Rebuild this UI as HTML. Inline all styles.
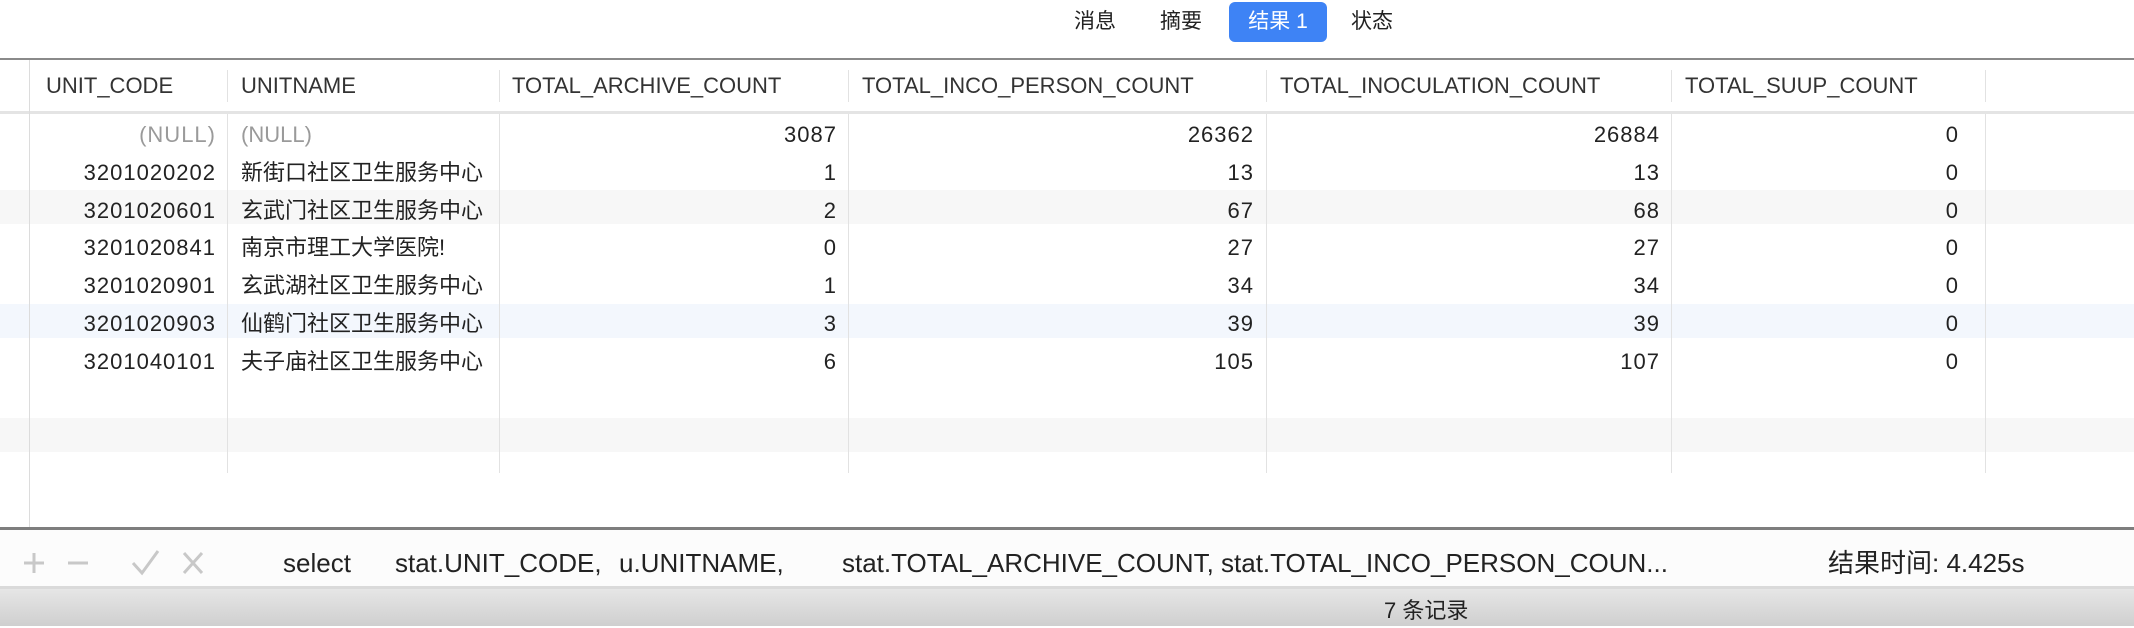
<!DOCTYPE html>
<html><head><meta charset="utf-8"><style>
*{margin:0;padding:0;box-sizing:border-box}
body{width:2134px;height:626px;overflow:hidden;background:#fff;position:relative;font-family:"Liberation Sans","Noto Sans CJK SC",sans-serif;font-size:22px;color:#222}
.a{position:absolute;white-space:pre}
.tab{position:absolute;top:2px;height:40px;line-height:40px;font-size:21px;color:#222}
.vl{position:absolute;width:1px;background:#e2e2e2}
.r{position:absolute;height:38px;line-height:38px;white-space:pre}
.rt{text-align:right;letter-spacing:1px}
.n{color:#9a9a9a}
.tb{position:absolute;white-space:pre;top:541px;line-height:44px;font-size:26px}
</style></head><body>
<div class="tab" style="left:1074px">消息</div>
<div class="tab" style="left:1160px">摘要</div>
<div class="tab" style="left:1229px;width:98px;background:#3e83f5;color:#fff;border-radius:6px;text-align:center">结果 1</div>
<div class="tab" style="left:1351px">状态</div>

<div style="position:absolute;left:0;top:58px;width:2134px;height:2px;background:#8a8a8a"></div>
<div style="position:absolute;left:0;top:111px;width:2134px;height:3px;background:#e4e4e4"></div>

<div style="position:absolute;left:0;top:190px;width:2134px;height:34px;background:#f7f7f7"></div>
<div style="position:absolute;left:0;top:304px;width:2134px;height:34px;background:#f3f7fd"></div>
<div style="position:absolute;left:0;top:418px;width:2134px;height:34px;background:#f7f7f7"></div>

<div class="vl" style="left:29px;top:60px;height:468px;background:#dcdcdc"></div>
<div class="vl" style="left:227px;top:70px;height:32px"></div>
<div class="vl" style="left:499px;top:70px;height:32px"></div>
<div class="vl" style="left:848px;top:70px;height:32px"></div>
<div class="vl" style="left:1266px;top:70px;height:32px"></div>
<div class="vl" style="left:1671px;top:70px;height:32px"></div>
<div class="vl" style="left:1985px;top:70px;height:32px"></div>
<div class="vl" style="left:227px;top:114px;height:359px"></div>
<div class="vl" style="left:499px;top:114px;height:359px"></div>
<div class="vl" style="left:848px;top:114px;height:359px"></div>
<div class="vl" style="left:1266px;top:114px;height:359px"></div>
<div class="vl" style="left:1671px;top:114px;height:359px"></div>
<div class="vl" style="left:1985px;top:114px;height:359px"></div>

<div class="a" style="left:46px;top:72px;line-height:28px;color:#333">UNIT_CODE</div>
<div class="a" style="left:241px;top:72px;line-height:28px;color:#333">UNITNAME</div>
<div class="a" style="left:512px;top:72px;line-height:28px;color:#333">TOTAL_ARCHIVE_COUNT</div>
<div class="a" style="left:862px;top:72px;line-height:28px;color:#333">TOTAL_INCO_PERSON_COUNT</div>
<div class="a" style="left:1280px;top:72px;line-height:28px;color:#333">TOTAL_INOCULATION_COUNT</div>
<div class="a" style="left:1685px;top:72px;line-height:28px;color:#333">TOTAL_SUUP_COUNT</div>

<div style="position:absolute;left:0;top:116px">
<div class="r rt n" style="left:30px;width:186px;top:0">(NULL)</div><div class="r n" style="left:241px;top:0">(NULL)</div>
<div class="r rt" style="left:500px;width:337px;top:0">3087</div><div class="r rt" style="left:849px;width:405px;top:0">26362</div><div class="r rt" style="left:1267px;width:393px;top:0">26884</div><div class="r rt" style="left:1672px;width:287px;top:0">0</div>

<div class="r rt" style="left:30px;width:186px;top:38px">3201020202</div><div class="r" style="left:241px;top:38px">新街口社区卫生服务中心</div>
<div class="r rt" style="left:500px;width:337px;top:38px">1</div><div class="r rt" style="left:849px;width:405px;top:38px">13</div><div class="r rt" style="left:1267px;width:393px;top:38px">13</div><div class="r rt" style="left:1672px;width:287px;top:38px">0</div>

<div class="r rt" style="left:30px;width:186px;top:76px">3201020601</div><div class="r" style="left:241px;top:76px">玄武门社区卫生服务中心</div>
<div class="r rt" style="left:500px;width:337px;top:76px">2</div><div class="r rt" style="left:849px;width:405px;top:76px">67</div><div class="r rt" style="left:1267px;width:393px;top:76px">68</div><div class="r rt" style="left:1672px;width:287px;top:76px">0</div>

<div class="r rt" style="left:30px;width:186px;top:113px">3201020841</div><div class="r" style="left:241px;top:113px">南京市理工大学医院!</div>
<div class="r rt" style="left:500px;width:337px;top:113px">0</div><div class="r rt" style="left:849px;width:405px;top:113px">27</div><div class="r rt" style="left:1267px;width:393px;top:113px">27</div><div class="r rt" style="left:1672px;width:287px;top:113px">0</div>

<div class="r rt" style="left:30px;width:186px;top:151px">3201020901</div><div class="r" style="left:241px;top:151px">玄武湖社区卫生服务中心</div>
<div class="r rt" style="left:500px;width:337px;top:151px">1</div><div class="r rt" style="left:849px;width:405px;top:151px">34</div><div class="r rt" style="left:1267px;width:393px;top:151px">34</div><div class="r rt" style="left:1672px;width:287px;top:151px">0</div>

<div class="r rt" style="left:30px;width:186px;top:189px">3201020903</div><div class="r" style="left:241px;top:189px">仙鹤门社区卫生服务中心</div>
<div class="r rt" style="left:500px;width:337px;top:189px">3</div><div class="r rt" style="left:849px;width:405px;top:189px">39</div><div class="r rt" style="left:1267px;width:393px;top:189px">39</div><div class="r rt" style="left:1672px;width:287px;top:189px">0</div>

<div class="r rt" style="left:30px;width:186px;top:227px">3201040101</div><div class="r" style="left:241px;top:227px">夫子庙社区卫生服务中心</div>
<div class="r rt" style="left:500px;width:337px;top:227px">6</div><div class="r rt" style="left:849px;width:405px;top:227px">105</div><div class="r rt" style="left:1267px;width:393px;top:227px">107</div><div class="r rt" style="left:1672px;width:287px;top:227px">0</div>
</div>

<div style="position:absolute;left:0;top:527px;width:2134px;height:3px;background:#7e7e7e"></div>
<div style="position:absolute;left:0;top:530px;width:2134px;height:56px;background:#fcfcfc"></div>
<div style="position:absolute;left:0;top:586px;width:2134px;height:3px;background:#dadada"></div>
<div style="position:absolute;left:0;top:589px;width:2134px;height:37px;background:linear-gradient(#e6e6e6,#cfcfcf)"></div>

<svg style="position:absolute;left:0;top:540px" width="220" height="46">
<g stroke="#c8c8c8" stroke-width="3" fill="none">
<path d="M24 23H44M34 13V33"/>
<path d="M68 23H88"/>
<path d="M133 23L142 33L158 11"/>
<path d="M184 13L202 33M202 13L184 33"/>
</g></svg>
<div class="tb" style="left:283px">select</div>
<div class="tb" style="left:395px">stat.UNIT_CODE,</div>
<div class="tb" style="left:619px">u.UNITNAME,</div>
<div class="tb" style="left:842px">stat.TOTAL_ARCHIVE_COUNT, stat.TOTAL_INCO_PERSON_COUN...</div>
<div class="tb" style="left:1828px">结果时间: 4.425s</div>
<div class="a" style="left:1384px;top:594px;line-height:34px">7 条记录</div>
</body></html>
